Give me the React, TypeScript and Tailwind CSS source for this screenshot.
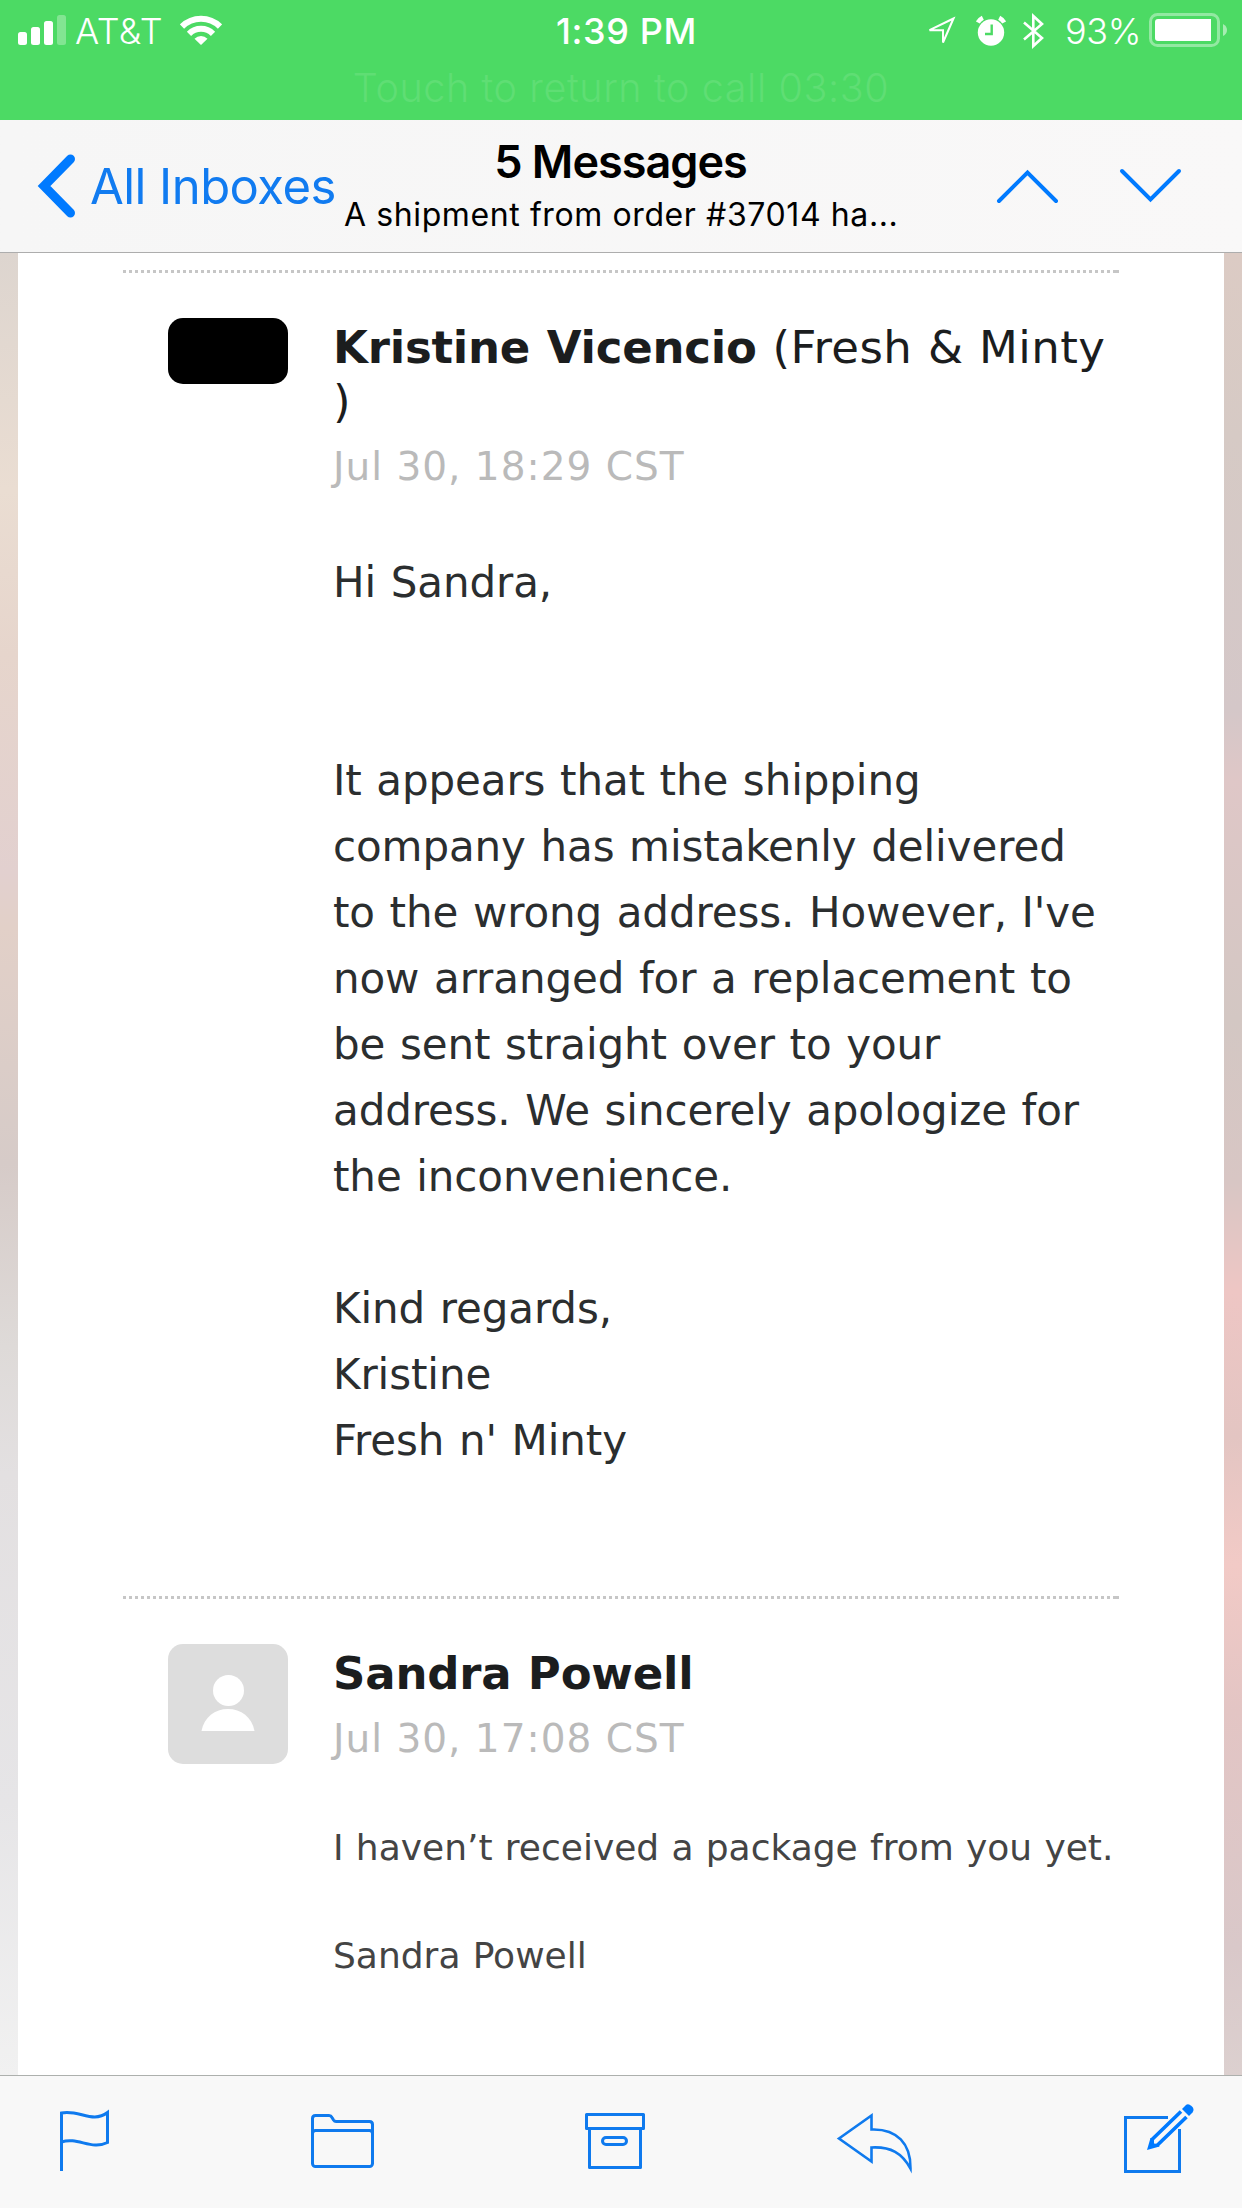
import React from 'react';

type Message = {
    id: number;
    name: string;
    company?: string;
    date: string;
    lines: string[];
    small?: boolean;
};

const messages: Message[] = [
    {
        id: 1,
        name: 'Kristine Vicencio',
        company: '(Fresh & Minty )',
        date: 'Jul 30, 18:29 CST',
        lines: [
            'Hi Sandra,',
            '',
            '',
            'It appears that the shipping',
            'company has mistakenly delivered',
            'to the wrong address. However, I\'ve',
            'now arranged for a replacement to',
            'be sent straight over to your',
            'address. We sincerely apologize for',
            'the inconvenience.',
            '',
            'Kind regards,',
            'Kristine',
            'Fresh n\' Minty',
        ],
    },
    {
        id: 2,
        name: 'Sandra Powell',
        date: 'Jul 30, 17:08 CST',
        lines: ['I haven’t received a package from you yet.', '', 'Sandra Powell'],
        small: true,
    },
];

function StatusBar() {
    return (
        <div className="h-[120px] bg-[#4cda64] text-white text-[36px] leading-[62px]">
            <div className="grid grid-cols-[540px_172px_1fr] h-[62px]">
                {/* Signal, carrier, wifi */}
                <div className="flex items-center pl-[18px]">
                    <svg className="mt-[-2px]" width="48" height="30" viewBox="0 0 48 30" fill="#fff">
                        <rect x="0" y="17" width="9" height="13" rx="2.5" />
                        <rect x="13" y="12" width="9" height="18" rx="2.5" />
                        <rect x="26" y="6" width="9" height="24" rx="2.5" />
                        <rect x="39" y="0" width="9" height="30" rx="2.5" opacity="0.3" />
                    </svg>
                    <span className="ml-[9px] w-[90px] font-light tracking-[0.5px] whitespace-nowrap">AT&amp;T</span>
                    <svg className="ml-[15px] mt-[-2px]" width="42" height="30" viewBox="0 0 42 30" fill="none" stroke="#fff" strokeWidth="6">
                        <path d="M2 11.5a27 27 0 0 1 38 0" />
                        <path d="M9 18.8a17 17 0 0 1 24 0" />
                        <path d="M14.5 23.8a9.2 9.2 0 0 1 13 0L21 30z" fill="#fff" stroke="none" />
                    </svg>
                </div>

                <div className="pl-px text-center font-medium tracking-[0.6px] whitespace-nowrap">1:39 PM</div>

                {/* Location, alarm, bluetooth, battery */}
                <div className="flex items-center justify-end pr-[14px]">
                    <svg width="30" height="32" viewBox="0 0 30 32" fill="none" stroke="#fff" strokeWidth="2">
                        <path d="M26.5 3.5L2.5 15.2H16v12.3z" />
                    </svg>
                    <svg className="ml-[19px]" width="30" height="32" viewBox="0 0 30 32">
                        <circle cx="15" cy="17.5" r="13.2" fill="#fff" />
                        <path d="M1.8 7.5A12 12 0 0 1 6.8 2.7M28.2 7.5A12 12 0 0 0 23.2 2.7" stroke="#fff" strokeWidth="4.4" />
                        <path d="M15.7 9.5v9.5H9" fill="none" stroke="#4cda64" strokeWidth="2.4" />
                    </svg>
                    <svg className="ml-[16px]" width="24" height="38" viewBox="0 0 24 38" fill="none" stroke="#fff" strokeWidth="2.6">
                        <path d="M2 10.5L20 26l-8.7 8V4L20 12 2 27.5" />
                    </svg>
                    <span className="ml-[19px] w-[75px] font-light tracking-[-0.4px] whitespace-nowrap">93%</span>
                    <svg className="ml-[9px] mt-[-2px]" width="79" height="34" viewBox="0 0 79 34">
                        <rect x="1.5" y="1.5" width="68" height="31" rx="7" fill="none" stroke="#fff" strokeWidth="3" opacity="0.4" />
                        <path d="M9 6H62V28H9a3 3 0 0 1-3-3V9a3 3 0 0 1 3-3z" fill="#fff" />
                        <path d="M74 11q4 2 4 6t-4 6z" fill="#fff" opacity="0.5" />
                    </svg>
                </div>
            </div>
            <div className="pt-px text-center text-[39.5px] leading-[51px] font-light tracking-[0.6px] text-[#5fde74]">
                Touch to return to call 03:30
            </div>
        </div>
    );
}

function NavBar() {
    return (
        <div className="grid grid-cols-[344px_553px_1fr] h-[133px] border-b border-[#adadad] bg-linear-to-r from-[#f6f6f6] to-[#f9f8f8]">
            <div className="flex items-center pl-[37px] text-[#117bf0]">
                <svg width="40" height="66" viewBox="0 0 40 66" fill="none" stroke="#007aff" strokeWidth="9" strokeLinecap="round">
                    <path d="M33.5 6L7 33l26.5 27" />
                </svg>
                <span className="ml-[13px] pt-px text-[49px] leading-[66px] tracking-[-0.55px] whitespace-nowrap">All Inboxes</span>
            </div>
            <div className="pt-[15px] text-center text-black whitespace-nowrap">
                <h1 className="text-[45px] leading-[54px] font-semibold tracking-[-1px]">5 Messages</h1>
                <p className="text-[32px] leading-[52px] tracking-[0.6px]">A shipment from order #37014 ha...</p>
            </div>
            <div className="flex items-center pl-[98px]">
                <svg width="66" height="38" viewBox="0 0 66 38" fill="none" stroke="#007aff" strokeWidth="4" strokeLinecap="round">
                    <path d="M4 34L32.5 5.5 61 34" />
                </svg>
                <svg className="ml-[57px]" width="66" height="38" viewBox="0 0 66 38" fill="none" stroke="#007aff" strokeWidth="4" strokeLinecap="round">
                    <path d="M4 4L32.5 32.5 61 4" />
                </svg>
            </div>
        </div>
    );
}

function Divider() {
    return <div className="h-[3px] border-r-[3px] border-[#c6c6c6] bg-[repeating-linear-gradient(to_right,#c6c6c6_0px_3px,transparent_3px_6px)]" />;
}

function MessageItem({ message }: { message: Message }) {
    return (
        <section>
            <Divider />
            <div className="flex pl-[45px] pt-[45px]">
                {message.company ? (
                    <div className="w-[120px] h-[66px] shrink-0 rounded-[15px] bg-black" />
                ) : (
                    <div className="w-[120px] h-[120px] shrink-0 rounded-[15px] bg-[#ddd]">
                        <svg width="120" height="120" viewBox="0 0 120 120" fill="#fff">
                            <circle cx="60.5" cy="46.5" r="15.5" />
                            <path d="M33.5 87C36 73 47 65 60 65s24 8 26.5 22z" />
                        </svg>
                    </div>
                )}
                <div className="ml-[45px] pt-[3px] whitespace-nowrap">
                    <h2 className="text-[45px] leading-[54px] text-[#1b1d1e] tracking-[0.4px] [word-spacing:1px] w-[786px] whitespace-normal">
                        <span className="font-bold tracking-[-0.2px]">{message.name}</span> {message.company}
                    </h2>
                    <p className="mt-[11px] text-[39px] leading-[54px] tracking-[1px] text-[#bababa]">{message.date}</p>
                    <div className={message.small
                        ? 'mt-[55px] text-[36px] leading-[54px] [word-spacing:0.8px] text-[#444]'
                        : 'mt-[56px] text-[42px] leading-[66px] tracking-[-0.1px] [word-spacing:1.4px] text-[#2b2e2f]'}
                    >
                        {message.lines.map((line, i) => (
                            <p key={i}>{line || '\u00a0'}</p>
                        ))}
                    </div>
                </div>
            </div>
        </section>
    );
}

function Toolbar() {
    return (
        <div className="flex items-start h-[133px] border-t border-[#adb0ad] bg-[#f8f8f8] pl-[59px] pt-[26px]">
            {/* Flag */}
            <svg width="52" height="72" viewBox="59 2102 52 72" fill="none" stroke="#0f7aee" strokeWidth="3">
                <path d="M61.5 2171V2113c17-4 31 11 46-.5V2142.5c-16 8-30-6-46-.5" />
            </svg>
            {/* Folder */}
            <svg className="ml-[199px]" width="66" height="72" viewBox="310 2102 66 72" fill="none" stroke="#0f7aee" strokeWidth="3">
                <path d="M312.5 2133V2118.5q0-3 3-3H329q2 0 3 2l1.5 2.5q1 1.5 2.5 1.5H369.5q3 0 3 3V2133" />
                <rect x="312.5" y="2130.5" width="60" height="36" rx="3" />
            </svg>
            {/* Archive */}
            <svg className="ml-[208px]" width="62" height="72" viewBox="584 2102 62 72" fill="none" stroke="#0f7aee" strokeWidth="3" strokeLinejoin="round">
                <rect x="586.5" y="2114.5" width="57" height="14" />
                <path d="M589.5 2128.5V2167.5H640.5V2128.5" />
                <rect x="602.5" y="2137.5" width="24" height="7" rx="3.5" />
            </svg>
            {/* Reply */}
            <svg className="ml-[190px]" width="78" height="72" viewBox="836 2102 78 72" fill="none" stroke="#0f7aee" strokeWidth="2.6">
                <path d="M839 2138.5L871.5 2115.5V2129.5C897 2128.5 911 2144 910.5 2168.5 902 2153 891 2146.5 871.5 2147.5V2161.5z" />
            </svg>
            {/* Compose */}
            <svg className="ml-[209px]" width="72" height="72" viewBox="1124 2102 72 72" fill="none" stroke="#0f7aee" strokeWidth="3">
                <path d="M1169 2117.5H1126.5V2171.5H1180.5V2129" />
                <path d="M1152.5 2140L1182 2111.5M1158 2145.5L1187.5 2117" stroke="#007aff" strokeWidth="3.6" />
                <path d="M1148 2150l3.5-12 3.5 1v4.5l4.5.5 1 2.5z" fill="#007aff" stroke="none" />
                <path d="M1183 2109l3.5-3.5q2.5-2.5 6 .5t1 6.500l-3.5 3.5z" fill="#007aff" stroke="none" />
            </svg>
        </div>
    );
}

export default function App() {
    return (
        <div className="w-[1242px] h-[2208px] flex flex-col overflow-hidden bg-white font-['Inter',sans-serif]">
            <StatusBar />
            <NavBar />
            <div className="flex flex-1 min-h-0">
                <div className="w-[18px] bg-[linear-gradient(to_bottom,#ddd5cf_0%,#eaddd2_13%,#e6d5cc_22%,#e2d0cf_34%,#e2d0c8_37%,#d6cbc8_50%,#dedad8_60%,#e3e0e1_67%,#e6e5e7_85%,#f1f1f1_100%)]" />
                <div className="w-[1206px] pl-[105px] pr-[105px] pt-[17px] bg-white overflow-hidden font-['DejaVu_Sans',sans-serif]">
                    <div className="h-[1326px]">
                        <MessageItem message={messages[0]} />
                    </div>
                    <MessageItem message={messages[1]} />
                </div>
                <div className="w-[18px] bg-[linear-gradient(to_bottom,#dccbc4_0%,#d6cac5_10%,#d4c7c8_25%,#dfc7c7_29%,#d3c7c3_42%,#d8c6c4_51%,#eec6c4_57%,#e3c5c2_65%,#f2cac6_72%,#e3c5c4_80%,#d9c8c9_93%,#dcd0cf_100%)]" />
            </div>
            <Toolbar />
        </div>
    );
}
